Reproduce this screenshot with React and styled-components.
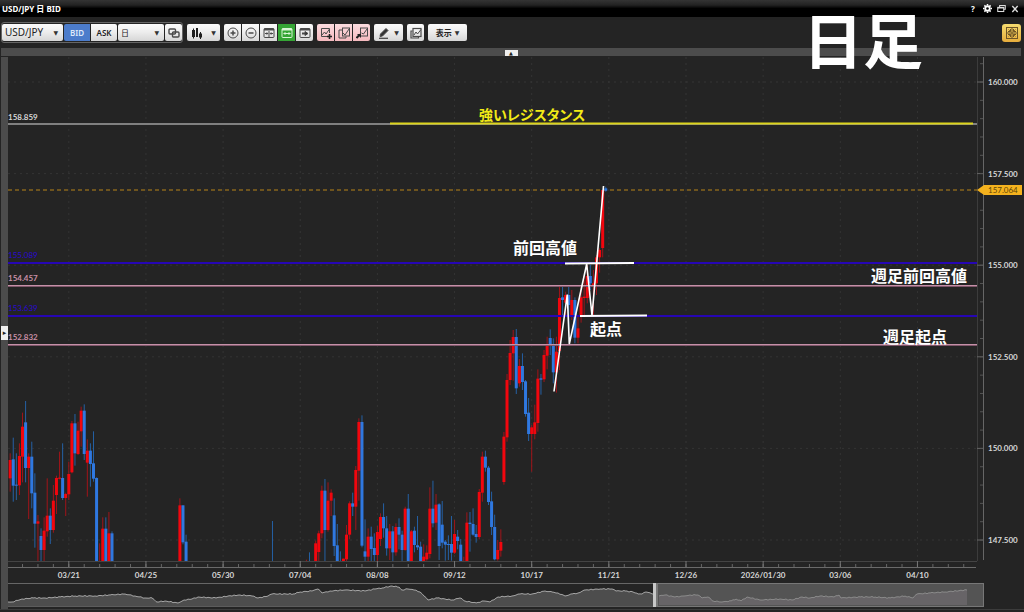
import React, { useState } from 'react'
import styled, { createGlobalStyle, css } from 'styled-components';

const STEP = 3.086
const ORIGIN = 68.8

// each row: bar number, high, body top, body bottom, low, u(p) / d(own)
const RANGE = {
    top: 390,
    rows: [
        [-19, 190, 210, 265, 305, 'u'], [-18, 143, 208, 287, 335, 'd'], [-17, 190, 284, 287, 330, 'd'],
        [-16, 160, 198, 286, 315, 'u'], [-15, 68, 110, 200, 277, 'u'], [-14, 33, 97, 234, 277, 'd'],
        [-13, 190, 200, 234, 387, 'u'], [-12, 155, 200, 310, 355, 'd'], [-11, 250, 308, 401, 473, 'd'],
        [-10, 375, 394, 401, 513, 'u'], [-9, 415, 438, 480, 513, 'd'], [-8, 382, 422, 480, 513, 'u'],
        [-7, 265, 377, 424, 440, 'u'], [-6, 355, 377, 420, 462, 'd'], [-5, 285, 332, 420, 428, 'u'],
        [-4, 257, 264, 315, 372, 'u'], [-3, 185, 263, 266, 268, 'u'], [-2, 160, 264, 324, 330, 'd'],
        [-1, 308, 312, 324, 378, 'u'], [0, 215, 252, 313, 330, 'u'], [1, 93, 100, 247, 250, 'u'],
        [2, 72, 100, 190, 227, 'd'], [3, 95, 122, 192, 195, 'u'], [4, 50, 62, 124, 170, 'u'],
        [5, 43, 62, 192, 210, 'd'], [6, 148, 182, 218, 320, 'u'], [7, 160, 182, 222, 290, 'd'],
        [8, 124, 220, 266, 275, 'd'], [9, 262, 264, 513, 513, 'd'], [10, 460, 513, 513, 513, 'u'],
        [11, 382, 416, 513, 513, 'u'], [12, 382, 416, 513, 513, 'd'], [13, 366, 430, 513, 513, 'u'],
        [14, 424, 430, 513, 513, 'd'], [36, 325, 346, 513, 513, 'u'], [37, 346, 346, 457, 463, 'd'],
        [38, 434, 455, 513, 513, 'd'], [66, 393, 513, 513, 513, 'd'], [77, 509, 513, 513, 513, 'u'],
        [78, 487, 513, 513, 513, 'd'], [80, 452, 460, 513, 513, 'u'], [81, 422, 430, 486, 513, 'u'],
        [82, 287, 302, 430, 445, 'u'], [83, 267, 302, 420, 513, 'd'], [84, 277, 332, 420, 425, 'u'],
        [85, 298, 308, 332, 378, 'u'], [86, 325, 376, 468, 498, 'd'], [87, 402, 466, 513, 513, 'd'],
        [88, 484, 513, 513, 513, 'd'], [89, 506, 506, 513, 513, 'u'], [90, 405, 434, 508, 513, 'u'],
        [91, 334, 340, 434, 448, 'u'], [92, 308, 340, 350, 378, 'd'], [93, 228, 240, 350, 420, 'u'],
        [94, 85, 96, 242, 332, 'u'], [95, 76, 96, 467, 472, 'd'], [96, 388, 484, 500, 513, 'd'],
        [97, 415, 440, 500, 513, 'u'], [98, 410, 440, 477, 513, 'd'], [99, 430, 474, 495, 513, 'd'],
        [100, 408, 426, 495, 513, 'u'], [101, 370, 381, 447, 468, 'u'], [102, 340, 381, 415, 443, 'd'],
        [103, 378, 415, 475, 497, 'd'], [104, 402, 424, 475, 510, 'u'], [105, 408, 424, 487, 513, 'd'],
        [106, 400, 411, 487, 497, 'u'], [107, 385, 411, 434, 478, 'd'], [108, 422, 434, 480, 513, 'd'],
        [109, 350, 356, 480, 482, 'u'], [110, 312, 356, 513, 513, 'd'], [111, 420, 424, 513, 513, 'u'],
        [112, 410, 422, 465, 487, 'd'], [113, 378, 466, 472, 480, 'd'], [114, 455, 470, 513, 513, 'd'],
        [115, 463, 500, 513, 513, 'u'], [116, 466, 488, 508, 512, 'u'], [117, 292, 356, 492, 505, 'u'],
        [118, 272, 356, 400, 412, 'd'], [119, 312, 344, 398, 420, 'u'], [120, 340, 343, 468, 510, 'd'],
        [121, 333, 404, 458, 475, 'd'], [122, 450, 455, 464, 512, 'd'], [123, 436, 462, 465, 510, 'd'],
        [124, 378, 462, 488, 512, 'd'], [125, 390, 432, 488, 492, 'u'], [126, 420, 440, 453, 478, 'd'],
        [127, 447, 464, 513, 513, 'd'], [128, 500, 513, 513, 513, 'u'], [129, 367, 398, 513, 513, 'u'],
        [130, 366, 398, 402, 485, 'd'], [131, 355, 402, 434, 437, 'd'], [132, 405, 432, 441, 458, 'd'],
        [133, 297, 306, 441, 448, 'u'], [134, 185, 200, 308, 335, 'u'], [135, 182, 200, 233, 245, 'd'],
        [136, 228, 233, 336, 345, 'd'], [137, 305, 334, 411, 435, 'd'], [138, 374, 411, 508, 511, 'd'],
        [139, 450, 480, 508, 512, 'u'], [140, 418, 456, 482, 500, 'u'], [141, 126, 140, 276, 284, 'u'],
    ],
}

const RALLY = {
    top: 170,
    rows: [
        [142, 612, 630, 802, 815, 'u'], [143, 510, 549, 630, 645, 'u'], [144, 480, 501, 550, 632, 'u'],
        [145, 477, 501, 655, 672, 'd'], [146, 567, 588, 640, 650, 'u'], [147, 550, 588, 636, 660, 'd'],
        [148, 630, 634, 732, 740, 'd'], [149, 684, 728, 792, 813, 'd'], [150, 765, 772, 792, 905, 'u'],
        [151, 704, 757, 792, 808, 'u'], [152, 598, 626, 759, 785, 'u'], [153, 612, 625, 629, 674, 'd'],
        [154, 540, 555, 628, 636, 'u'], [155, 500, 528, 557, 598, 'u'], [156, 478, 504, 526, 555, 'd'],
        [157, 505, 523, 607, 640, 'd'], [158, 500, 545, 607, 668, 'u'], [159, 348, 384, 543, 600, 'u'],
        [160, 350, 382, 390, 440, 'd'], [161, 365, 375, 398, 440, 'u'], [162, 346, 375, 405, 480, 'd'],
        [163, 360, 390, 440, 450, 'u'], [164, 382, 390, 503, 520, 'd'], [165, 440, 475, 503, 520, 'u'],
        [166, 345, 382, 440, 458, 'u'], [167, 330, 380, 384, 436, 'u'], [168, 285, 318, 384, 400, 'u'],
        [169, 285, 318, 340, 360, 'd'], [170, 300, 340, 345, 436, 'u'], [171, 255, 262, 340, 375, 'u'],
        [172, 235, 240, 262, 308, 'u'], [173, 60, 60, 234, 262, 'u'], [174, 50, 55, 62, 65, 'd'],
    ],
}

const DATES = ['03/21', '04/25', '05/30', '07/04', '08/08', '09/12', '10/17', '11/21', '12/26', '2026/01/30', '03/06', '04/10']
const PRICES = ['160.000', '157.500', '155.000', '152.500', '150.000', '147.500']

const LEVELS = [
    { price: '155.089', y: 263, kind: 'blue' },
    { price: '154.457', y: 286, kind: 'pink' },
    { price: '153.639', y: 316, kind: 'blue' },
    { price: '152.832', y: 345, kind: 'pink' },
]

const HISTORY = [
    [8, 602], [12, 602], [22, 599], [33, 598], [45, 598], [60, 597], [75, 596], [95, 596], [110, 595], [125, 594],
    [135, 596], [145, 598], [152, 598], [157, 602], [165, 601], [178, 603], [184, 600], [192, 599], [198, 597],
    [216, 598], [228, 596], [240, 595], [252, 596], [258, 598], [268, 596], [272, 594], [293, 594], [300, 592],
    [312, 591], [318, 589], [322, 593], [330, 591], [345, 590], [365, 591], [375, 589], [382, 588], [392, 586],
    [399, 587], [402, 590], [408, 589], [414, 590], [420, 592], [424, 596], [428, 600], [437, 598], [445, 599],
    [452, 600], [460, 598], [465, 601], [476, 603], [484, 601], [490, 602], [498, 597], [512, 596], [520, 594],
    [532, 594], [545, 591], [552, 592], [558, 593], [565, 596], [572, 594], [578, 593], [585, 590], [600, 589],
    [612, 589], [616, 591], [625, 591], [633, 592], [638, 594], [642, 594], [646, 592], [654, 594],
]
const SELECTED = [
    [659, 596], [665, 595], [675, 597], [684, 596], [690, 595], [698, 595], [702, 598], [708, 597], [713, 601],
    [722, 602], [731, 601], [736, 599], [741, 601], [747, 597], [760, 600], [780, 599], [792, 600], [802, 597],
    [810, 598], [820, 596], [834, 597], [839, 595], [841, 598], [860, 597], [875, 597], [890, 598], [905, 596],
    [913, 598], [917, 594], [930, 593], [945, 592], [967, 590],
]

const trace = (points) => {
    const out = []
    points.forEach(([x, y], i) => {
        out.push(`${x},${y}`)
        const next = points[i + 1]
        if (!next) return
        for (let px = x + 2; px < next[0]; px += 2) {
            const t = (px - x) / (next[0] - x)
            out.push(`${px},${(y + (next[1] - y) * t + Math.sin(px * 1.9) * 0.5).toFixed(1)}`)
        }
    })
    return out.join(' ')
}

const Candles = ({ series }) => series.rows.map(([bar, high, open, close, low, dir]) => {
    const x = ORIGIN + bar * STEP
    const y = (v) => series.top + v / 3
    return (
        <g key={bar}>
            <rect x={x - 0.5} y={y(high)} width='1' height={y(low) - y(high)} fill={dir === 'u' ? '#a0141a' : '#2560a4'} />
            {close > open && (
                <rect x={x - 1.5} y={y(open)} width='3' height={y(close) - y(open)} fill={dir === 'u' ? '#f2060e' : '#2f78e0'} />
            )}
        </g>
    )
})

const minorTicks = Array.from({ length: 63 }, (_, i) => ORIGIN + (i - 3) * STEP * 5).filter((x) => x > 8 && x < 974)

const PriceChart = () => (
    <ChartSvg viewBox='8 57 1016 526' role='img' aria-label='USD/JPY'>
        <g stroke='#343434' strokeDasharray='2 4'>
            {DATES.map((d, i) => <line key={d} x1={ORIGIN + i * 77.15} x2={ORIGIN + i * 77.15} y1='57' y2='561' />)}
            {PRICES.map((p, i) => <line key={p} x1='8' x2='977' y1={82 + i * 91.6} y2={82 + i * 91.6} />)}
        </g>
        <line x1='8' x2='977' y1='190' y2='190' stroke='#6e541e' strokeWidth='2' strokeDasharray='4 3' />
        <Candles series={RANGE} />
        <Candles series={RALLY} />

        <line x1='8' x2='977' y1='124' y2='124' stroke='#808080' strokeWidth='2' />
        <Figure x='8' y='120'>158.859</Figure>
        {LEVELS.map(({ price, y, kind }) => (
            <g key={price}>
                {kind === 'blue' && <line x1='8' x2='977' y1={y} y2={y} stroke='#2606b4' strokeWidth='2' />}
                {kind === 'pink' && (
                    <>
                        <rect x='8' y={y - 1} width='969' height='2' fill='#80566a' />
                        <rect x='8' y={y - 1} width='969' height='1' fill='#c591a8' />
                    </>
                )}
                <Figure x='8' y={y - 5} $kind={kind}>{price}</Figure>
            </g>
        ))}

        <line x1='390' x2='973' y1='123.5' y2='123.5' stroke='#dcd41c' strokeWidth='2' />
        <g stroke='#fff' strokeWidth='2' fill='none'>
            <path d='M565 263.5L634 263' />
            <path d='M580 316L647 315.5' />
            <path d='M554 391.5L567.3 294.5L569.3 344L586.7 264L592 315.5L603.5 186' strokeWidth='1.6' />
        </g>
        <Note x='479' y='120' $yellow>強いレジスタンス</Note>
        <Note x='513' y='254'>前回高値</Note>
        <Note x='590' y='335'>起点</Note>
        <Note x='871' y='282'>週足前回高値</Note>
        <Note x='883' y='343'>週足起点</Note>

        <path d='M977.5 57V561' stroke='#3c3c3c' />
        <path d='M983.5 57V560' stroke='#666' />
        {PRICES.map((p, i) => (
            <g key={p}>
                <line x1='977' x2='983' y1={82 + i * 91.6} y2={82 + i * 91.6} stroke='#666' />
                <Figure x='988' y={85 + i * 91.6}>{p}</Figure>
            </g>
        ))}
        {Array.from({ length: 27 }, (_, i) => (
            <line key={i} x1='980' x2='983' y1={63.7 + i * 18.32} y2={63.7 + i * 18.32} stroke='#555' />
        ))}
        <path d='M977 190L984 185H1022V195H984Z' fill='#f4b21e' />
        <Figure x='988' y='193' $kind='now'>157.064</Figure>

        <path d='M8 561.5H977' stroke='#444' />
        <path d='M8 567.5H976' stroke='#6a6a6a' />
        {minorTicks.map((x) => <line key={x} x1={x} x2={x} y1='564' y2='567' stroke='#666' />)}
        {DATES.map((d, i) => (
            <g key={d}>
                <line x1={ORIGIN + i * 77.15} x2={ORIGIN + i * 77.15} y1='561' y2='567' stroke='#777' />
                <Figure x={ORIGIN + i * 77.15} y='578' textAnchor='middle'>{d}</Figure>
            </g>
        ))}
    </ChartSvg>
)

const Overview = () => (
    <ChartSvg viewBox='8 583 1016 26' aria-hidden='true'>
        <path d='M8 583.5H984' stroke='#666' />
        <polygon points={`8,606 ${trace(HISTORY)} 654,606`} fill='#4d4d4d' />
        <polyline points={trace(HISTORY)} fill='none' stroke='#a6a6a6' />
        <path d='M8 606.5H654' stroke='#5c5c5c' />
        <rect x='656' y='583.5' width='327.5' height='23' fill='#545454' stroke='#777' />
        <polygon points={`659,605 ${trace(SELECTED)} 967,605`} fill='#676467' />
        <polyline points={trace(SELECTED)} fill='none' stroke='#8b8b8b' />
        <rect x='653' y='583' width='3' height='24' fill='#c8c8c8' />
        <rect x='656' y='583' width='2' height='24' fill='#777' />
    </ChartSvg>
)

const Icon = ({ children, size = 12 }) => (
    <svg width={size} height={size} viewBox='0 0 12 12' fill='none' stroke='#4a4a4a' strokeWidth='1' aria-hidden='true'>{children}</svg>
)

const Frame = () => (
    <>
        <rect x='1' y='1.5' width='10' height='9' rx='1' />
        <path d='M1 2.5H11' strokeWidth='2' />
    </>
)

const Picker = ({ label, value, options, onChange, size, width }) => (
    <PickerBox $width={width}>
        <select aria-label={label} value={value} onChange={(e) => onChange(e.target.value)} data-size={size}>
            {options.map((o) => <option key={o}>{o}</option>)}
        </select>
        <Caret>▼</Caret>
    </PickerBox>
)

const App = () => {
    const [pair, setPair] = useState('USD/JPY')
    const [span, setSpan] = useState('日')
    const [side, setSide] = useState('BID')

    return (
        <Window>
            <GlobalStyle />
            <TitleBar>
                <h1>{pair} {span} {side}</h1>
                <div className='tools'>
                    <button aria-label='ヘルプ'>?</button>
                    <button aria-label='設定'>
                        <svg width='9' height='9' viewBox='0 0 12 12' fill='none' stroke='#fff'>
                            <circle cx='6' cy='6' r='3' strokeWidth='2.4' />
                            <path d='M6 0V2M6 10V12M0 6H2M10 6H12M1.8 1.8L3.2 3.2M8.8 8.8L10.2 10.2M10.2 1.8L8.8 3.2M3.2 8.8L1.8 10.2' strokeWidth='2' />
                        </svg>
                    </button>
                    <button aria-label='元に戻す'>
                        <svg width='9' height='9' viewBox='0 0 12 12' fill='none' stroke='#ddd' strokeWidth='1.4'>
                            <path d='M3.5 4V2H11V7H9' />
                            <rect x='1' y='4.5' width='8' height='5.5' />
                            <path d='M1 5H9' strokeWidth='2' />
                        </svg>
                    </button>
                    <button aria-label='閉じる'>
                        <svg width='8' height='8' viewBox='0 0 12 12' stroke='#ddd' strokeWidth='2'><path d='M2 1.5L10 10.5M10 1.5L2 10.5' /></svg>
                    </button>
                </div>
            </TitleBar>

            <Toolbar>
                <Group>
                    <Picker label='通貨ペア' value={pair} options={['USD/JPY', 'EUR/JPY', 'GBP/JPY']} onChange={setPair} size='large' width={61} />
                    <Segment>
                        <Tool $width={26} $tone={side === 'BID' ? 'blue' : 'plain'} onClick={() => setSide('BID')}>BID</Tool>
                        <Tool $width={26} $tone={side === 'ASK' ? 'blue' : 'plain'} onClick={() => setSide('ASK')}>ASK</Tool>
                    </Segment>
                    <Picker label='足種' value={span} options={['日', '週', '月']} onChange={setSpan} width={46} />
                    <Tool aria-label='連動'>
                        <Icon>
                            <rect x='1' y='2' width='6.5' height='5' rx='1' strokeWidth='1.4' />
                            <rect x='4.5' y='5' width='6.5' height='5' rx='1' strokeWidth='1.4' />
                        </Icon>
                    </Tool>
                </Group>
                <Tool $width={33} $gap={8} aria-label='チャート種類'>
                    <svg width='12' height='12' viewBox='0 0 12 12' fill='#1e1e1e' aria-hidden='true'>
                        <path d='M1 3h3v7h-3zM2 1.5h1v10h-1zM5 1h2v9h-2zM8 6.500h3v4h-3zM9 5h1v7h-1z' />
                    </svg>
                    <Caret>▼</Caret>
                </Tool>
                <Segment>
                    <Tool aria-label='拡大'><Icon><circle cx='6' cy='6' r='5' /><path d='M3.500 6h5M6 3.500v5' strokeWidth='1.500' /></Icon></Tool>
                    <Tool aria-label='縮小'><Icon><circle cx='6' cy='6' r='5' /><path d='M3.500 6h5' strokeWidth='1.500' /></Icon></Tool>
                    <Tool aria-label='幅を縮める'><Icon><Frame /><path d='M6 4v6M2 6.500h3M10 6.500h-3' /><path d='M3.500 5L5.500 6.500L3.500 8ZM8.500 5L6.500 6.500L8.500 8Z' fill='#4a4a4a' stroke='none' /></Icon></Tool>
                    <Tool $tone='green' aria-label='幅を広げる'>
                        <svg width='12' height='12' viewBox='0 0 12 12' fill='none' stroke='#d9f5d6' aria-hidden='true'>
                            <Frame /><path d='M3 6.500h6' /><path d='M4.500 5L2 6.500L4.500 8ZM7.500 5L10 6.500L7.500 8Z' fill='#d9f5d6' stroke='none' />
                        </svg>
                    </Tool>
                    <Tool aria-label='最新へ'><Icon><Frame /><path d='M3 6.500h3' strokeWidth='2' /><path d='M6 4.500L9 6.500L6 8.500Z' fill='#333' /></Icon></Tool>
                </Segment>
                <Segment>
                    <Tool $tone='pink' aria-label='描画を追加'><Icon><path d='M7 9.500H1.500V1.500H9.500V6M2 8L4.500 5L6 7L9.500 2' /><path d='M9.500 7v5M7 9.500h5' stroke='#222' strokeWidth='1.600' /></Icon></Tool>
                    <Tool $tone='pink' aria-label='描画をコピー'><Icon><path d='M4 3H1V11H8V9.500' /><rect x='4.500' y='1' width='7' height='8' /><path d='M5 6l2 2L11 2' /></Icon></Tool>
                    <Tool $tone='pink' aria-label='描画を移動'><Icon><rect x='4.500' y='1' width='7' height='8' /><path d='M5.500 6l2 1L11 2' /><path d='M0.500 11L4 7.500' stroke='#222' strokeWidth='2' /><path d='M1 7h4v4Z' stroke='none' fill='#222' /></Icon></Tool>
                </Segment>
                <Tool $width={29} aria-label='ペン'>
                    <Icon><path d='M2.500 7L8 1.500L10 3.500L4.500 9L2 9.500Z' fill='#333' /><path d='M1 11.300H10' strokeWidth='1.300' /></Icon>
                    <Caret>▼</Caret>
                </Tool>
                <Tool aria-label='重ねる'><Icon><path d='M2.500 4H1v7h7.500V9.500' strokeWidth='1.200' /><rect x='3' y='1.500' width='8' height='8' strokeWidth='1.200' /><path d='M4 8l2-3l1.500 2L11 2.500' /></Icon></Tool>
                <Tool $width={39} $gap={3}>表示<Caret>▼</Caret></Tool>
                <Layout aria-label='レイアウト'>
                    <svg width='12' height='12' viewBox='0 0 12 12' fill='none' stroke='#6d5527' aria-hidden='true'>
                        <rect x='0.500' y='0.500' width='11' height='11' />
                        <path d='M6 1v10M1 6h10' />
                        <path d='M2.500 2.500l2 2M9.500 2.500l-2 2M2.500 9.500l2-2M9.500 9.500l-2-2' stroke='#946f22' />
                        <path d='M4.500 2v2.500H2M7.500 2v2.500H10M4.500 10V7.500H2M7.500 10V7.500H10' />
                    </svg>
                </Layout>
            </Toolbar>

            <Divider><button aria-label='ツールバーを隠す'>▲</button></Divider>
            <Body>
                <Side><button aria-label='パネルを開く'>▸</button></Side>
                <main>
                    <PriceChart />
                    <Overview />
                </main>
            </Body>
            <Heading>日足</Heading>
        </Window>
    )
}

const GlobalStyle = createGlobalStyle`
    *{
        box-sizing: border-box;
    }
    body{
        margin: 0;
        background: #242424;
    }
    button, select{
        font: inherit;
        color: inherit;
        margin: 0;
        padding: 0;
        border: 0;
        background: none;
    }
`;

const face = css`
    background: linear-gradient(180deg, #fbfbfb 0%, #ececec 50%, #d6d6d6 100%);
`;

const tones = {
    plain: face,
    blue: css`background: #4c7ccb; color: #dfe9fa;`,
    green: css`background: #35a535;`,
    pink: css`background: linear-gradient(180deg, #fbdcdf 0%, #f5b9be 100%);`,
};

const Window = styled.div`
    position: relative;
    width: 100%;
    min-height: 100vh;
    background: #242424;
    color: #222;
    font-family: 'Noto Sans', 'Noto Sans CJK JP', sans-serif;
    font-size: 8px;
`;

const TitleBar = styled.header`
    height: 17px;
    padding: 0 4px 0 2px;
    display: flex;
    align-items: center;
    justify-content: space-between;
    background: linear-gradient(180deg, #343434 0%, #222 30%, #000 50%);
    color: #fff;
    h1{
        margin: 0;
        font-size: 8px;
        font-weight: 700;
        line-height: 17px;
    }
    .tools{
        display: flex;
        align-items: center;
        gap: 4px;
        button{
            width: 10px;
            height: 10px;
            display: flex;
            align-items: center;
            justify-content: center;
            font-weight: 700;
        }
    }
`;

const Toolbar = styled.nav`
    height: 31px;
    padding: 0 3px 0 1px;
    display: flex;
    align-items: center;
    gap: 4px;
`;

const Group = styled.div`
    display: flex;
    align-items: center;
    gap: 1px;
    padding: 1px 0;
    border: 1px solid #666;
    border-radius: 3px;
`;

const Segment = styled.div`
    display: flex;
    gap: 1px;
    border-radius: 2px;
    overflow: hidden;
    button{
        border-radius: 0;
    }
`;

const Caret = styled.span.attrs({ 'aria-hidden': true })`
    font-family: 'DejaVu Sans', sans-serif;
    font-size: 6px;
    line-height: 10px;
    color: #333;
`;

const Tool = styled.button`
    width: ${({ $width }) => $width || 17}px;
    height: 17px;
    flex: none;
    display: flex;
    align-items: center;
    justify-content: center;
    gap: ${({ $gap }) => $gap || 4}px;
    border-radius: 2px;
    font-size: 8px;
    font-weight: 600;
    ${({ $tone }) => tones[$tone || 'plain']}
`;

const PickerBox = styled.span`
    width: ${({ $width }) => $width}px;
    height: 17px;
    flex: none;
    display: grid;
    align-items: center;
    border-radius: 2px;
    ${face}
    select{
        grid-area: 1 / 1;
        width: 100%;
        height: 17px;
        padding: 0 0 0 3px;
        appearance: none;
        font-size: 8px;
        line-height: 17px;
    }
    select[data-size='large']{
        font-size: 10px;
    }
    ${Caret}{
        grid-area: 1 / 1;
        justify-self: end;
        padding-right: 5px;
        pointer-events: none;
    }
`;

const Layout = styled.button`
    width: 19px;
    height: 18px;
    margin-left: auto;
    display: flex;
    align-items: center;
    justify-content: center;
    border-radius: 3px;
    background: linear-gradient(180deg, #f6dc70 0%, #e6ac3c 100%);
`;

const Divider = styled.div`
    height: 8px;
    margin: 0 3px 1px 1px;
    display: flex;
    align-items: flex-end;
    justify-content: center;
    background: #4c4c4c;
    button{
        width: 13px;
        height: 6px;
        background: #eee;
        font-family: 'DejaVu Sans', sans-serif;
        font-size: 5px;
        line-height: 6px;
    }
`;

const Body = styled.div`
    display: flex;
    border-bottom: 1px solid #3c3c3c;
    main{
        flex: 1;
        min-width: 0;
    }
`;

const Side = styled.div`
    width: 7px;
    margin-left: 1px;
    flex: none;
    display: flex;
    align-items: center;
    background: #4c4c4c;
    button{
        width: 7px;
        height: 14px;
        background: #eee;
        font-family: 'DejaVu Sans', sans-serif;
        font-size: 7px;
        line-height: 14px;
    }
`;

const ChartSvg = styled.svg`
    display: block;
    width: 100%;
    height: auto;
`;

const figureColors = { blue: '#2a08d0', pink: '#c890a6', now: '#5d4508' };

const Figure = styled.text`
    font-family: Lato, sans-serif;
    font-size: 8px;
    font-weight: ${({ $kind }) => ($kind === 'blue' || $kind === 'now' ? 400 : 700)};
    fill: ${({ $kind }) => figureColors[$kind] || '#d6d6d6'};
`;

const Note = styled.text`
    font-family: 'Noto Sans CJK JP', sans-serif;
    font-size: ${({ $yellow }) => ($yellow ? 14 : 16)}px;
    font-weight: 700;
    font-feature-settings: ${({ $yellow }) => ($yellow ? "'palt'" : 'normal')};
    fill: ${({ $yellow }) => ($yellow ? '#f2ea16' : '#fff')};
`;

const Heading = styled.h2`
    position: absolute;
    top: 0;
    right: 101px;
    margin: 0;
    color: #fff;
    font-family: 'Noto Sans CJK JP', sans-serif;
    font-size: 60px;
    font-weight: 700;
    line-height: 76px;
    pointer-events: none;
`;

export default App
